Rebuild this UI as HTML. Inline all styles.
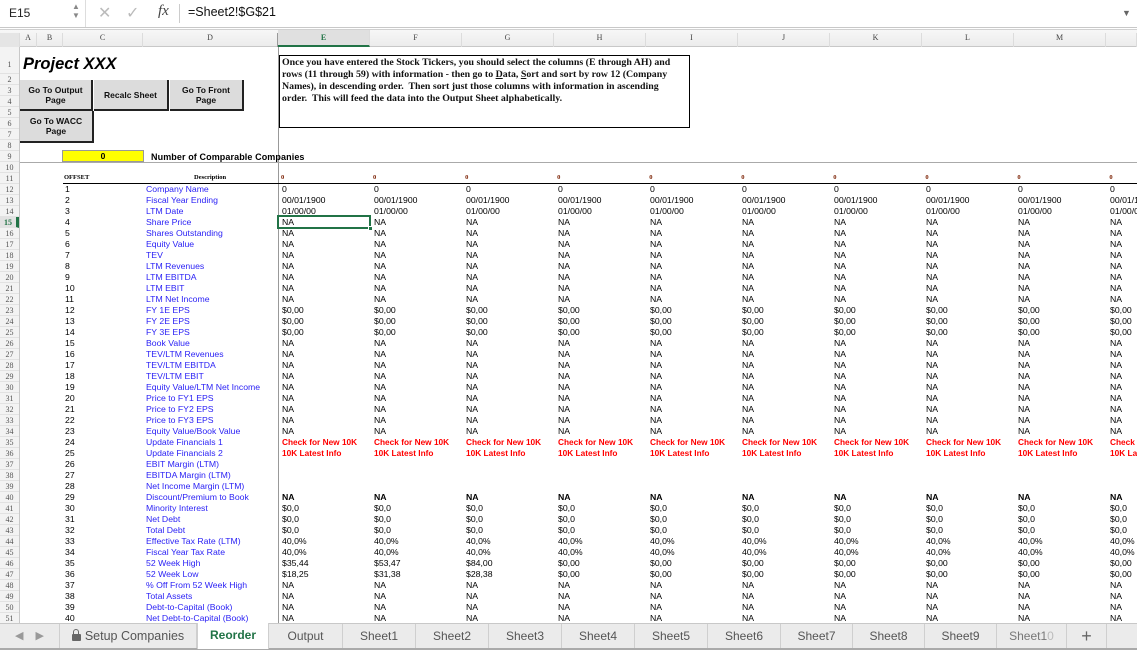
<!DOCTYPE html>
<html><head><meta charset="utf-8"><style>
*{margin:0;padding:0;box-sizing:border-box}
body{width:1137px;height:650px;overflow:hidden;background:#fff;position:relative;font-family:"Liberation Sans",sans-serif}
.a{position:absolute}
#fb{left:0;top:0;width:1137px;height:28px;border-bottom:1px solid #c8c8c8;background:#fff}
#hdr{left:0;top:29px;width:1137px;height:18px;background:linear-gradient(#f7f7f7,#ececec);border-top:1px solid #d0d0d0;border-bottom:1px solid #c8c8c8;font-family:"Liberation Serif",serif;font-size:8px;color:#444}
#hdr span{position:absolute;top:3px;text-align:center;border-right:1px solid #dcdcdc;height:14px}
#rh{left:0;top:47px;width:20px;height:578px;background:#f3f3f3;border-right:1px solid #c8c8c8;font-family:"Liberation Serif",serif;font-size:8px;color:#555}
#rh div{height:11px;line-height:11px;text-align:center;border-bottom:1px solid #e2e2e2}
#rh div.f{height:26.5px;line-height:36px}
#rh div.sel{color:#217346;font-weight:bold;background:#e2e2e2;border-right:3px solid #217346}
.btn{position:absolute;background:#dcdcdc;border-right:2px solid #222;border-bottom:2px solid #222;font-size:8.5px;font-weight:bold;text-align:center;color:#111;display:flex;align-items:center;justify-content:center;line-height:10px}
#data{left:0;top:183.5px;width:1137px;font-size:8.7px;line-height:11px;color:#000;white-space:nowrap;overflow:hidden}
#data div{height:11px;overflow:hidden}
#data s{display:inline-block;width:81px;margin-left:65px;text-decoration:none}
#data u{display:inline-block;width:136px;text-decoration:none;color:#2b22f5}
#data i{display:inline-block;width:92px;font-style:normal}
#data .b i{font-weight:bold}
#data .r i{font-weight:bold;color:#f00;font-size:8.3px}
#tabs{left:0;top:623px;width:1137px;height:27px;background:#ebebeb;border-top:1px solid #c8c8c8;border-bottom:2px solid #aaa;font-size:12px;color:#555}
#tabs span{position:absolute;top:0;height:24px;line-height:24px;text-align:center;border-right:1px solid #cfcfcf}
.lock{display:inline-block;position:relative;width:9px;height:7px;background:#666;border-radius:1px;margin-right:4px;vertical-align:-1px}
.lock:before{content:"";position:absolute;left:1.5px;top:-5px;width:6px;height:6px;border:1.5px solid #666;border-bottom:0;border-radius:3px 3px 0 0;box-sizing:border-box}
</style></head><body>
<div id="fb" class="a">
<div class="a" style="left:9px;top:6px;font-size:12px;color:#222">E15</div>
<div class="a" style="left:72px;top:2px;font-size:8px;color:#888;line-height:9px">▲<br>▼</div>
<div class="a" style="left:85px;top:0;width:1px;height:27px;background:#ddd"></div>
<div class="a" style="left:98px;top:3px;font-size:16px;color:#bbb">✕</div>
<div class="a" style="left:126px;top:3px;font-size:16px;color:#bbb">✓</div>
<div class="a" style="left:158px;top:3px;font-size:15px;font-style:italic;font-family:'Liberation Serif',serif;color:#444">fx</div>
<div class="a" style="left:179px;top:4px;width:1px;height:19px;background:#ccc"></div>
<div class="a" style="left:188px;top:5px;font-size:12.5px;color:#111">=Sheet2!$G$21</div>
<div class="a" style="left:1122px;top:8px;font-size:9px;color:#666">▼</div>
</div>
<div id="hdr" class="a">
<span style="left:0;width:20px;background:#e5e5e5"></span>
<span style="left:20px;width:17px">A</span><span style="left:37px;width:26px">B</span><span style="left:63px;width:80px">C</span><span style="left:143px;width:135px;border-right:1px solid #999">D</span>
<span style="left:278px;width:92px;color:#217346;font-weight:bold;background:#e0e0e0;border-bottom:2px solid #217346;height:17px;top:0;padding-top:3px">E</span>
<span style="left:370px;width:92px">F</span><span style="left:462px;width:92px">G</span><span style="left:554px;width:92px">H</span><span style="left:646px;width:92px">I</span><span style="left:738px;width:92px">J</span><span style="left:830px;width:92px">K</span><span style="left:922px;width:92px">L</span><span style="left:1014px;width:92px">M</span><span style="left:1106px;width:31px"></span>
</div>
<div id="rh" class="a">
<div class="f">1</div><div>2</div><div>3</div><div>4</div><div>5</div><div>6</div><div>7</div><div>8</div><div>9</div><div>10</div><div>11</div><div>12</div><div>13</div><div>14</div><div class="sel">15</div><div>16</div><div>17</div><div>18</div><div>19</div><div>20</div><div>21</div><div>22</div><div>23</div><div>24</div><div>25</div><div>26</div><div>27</div><div>28</div><div>29</div><div>30</div><div>31</div><div>32</div><div>33</div><div>34</div><div>35</div><div>36</div><div>37</div><div>38</div><div>39</div><div>40</div><div>41</div><div>42</div><div>43</div><div>44</div><div>45</div><div>46</div><div>47</div><div>48</div><div>49</div><div>50</div><div>51</div><div>52</div>
</div>
<div class="a" style="left:278px;top:47px;width:1px;height:576px;background:#999"></div>
<div class="a" style="left:20px;top:162px;width:1117px;height:1px;background:#aaa"></div>
<div class="a" style="left:63px;top:183px;width:1074px;height:1px;background:#000"></div>

<div class="a" style="left:23px;top:55px;font-size:16.5px;font-weight:bold;font-style:italic;color:#000">Project XXX</div>
<div class="btn" style="left:20px;top:80px;width:73px;height:31px">Go To Output<br>Page</div>
<div class="btn" style="left:94px;top:80px;width:75px;height:31px">Recalc Sheet</div>
<div class="btn" style="left:170px;top:80px;width:74px;height:31px">Go To Front<br>Page</div>
<div class="btn" style="left:20px;top:111px;width:74px;height:32px">Go To WACC<br>Page</div>
<div class="a" style="left:62px;top:150px;width:82px;height:12px;background:#ff0;border:1px solid #999;font-size:8.5px;font-weight:bold;text-align:center;line-height:10px">0</div>
<div class="a" style="left:151px;top:152px;font-size:9px;font-weight:bold;letter-spacing:0.1px">Number of Comparable Companies</div>
<div class="a" style="left:279px;top:55px;width:411px;height:73px;border:1px solid #000;padding:1px 2px;font-family:'Liberation Serif',serif;font-weight:bold;font-size:9.9px;line-height:12px;color:#111;white-space:nowrap;overflow:hidden">Once you have entered the Stock Tickers, you should select the columns (E through AH) and<br>rows (11 through 59) with information - then go to <u>D</u>ata, <u>S</u>ort and sort by row 12 (Company<br>Names), in descending order.&nbsp; Then sort just those columns with information in ascending<br>order.&nbsp; This will feed the data into the Output Sheet alphabetically.</div>

<div class="a" style="left:64px;top:174px;font-family:'Liberation Serif',serif;font-size:6.5px;font-weight:bold">OFFSET</div>
<div class="a" style="left:194px;top:174px;font-family:'Liberation Serif',serif;font-size:6.5px;font-weight:bold">Description</div>
<div class="a" style="left:281px;top:174px;font-family:'Liberation Serif',serif;font-size:6.5px;font-weight:bold;color:#7a1f00;white-space:nowrap">0<span style="margin-left:88.8px">0</span><span style="margin-left:88.8px">0</span><span style="margin-left:88.8px">0</span><span style="margin-left:88.8px">0</span><span style="margin-left:88.8px">0</span><span style="margin-left:88.8px">0</span><span style="margin-left:88.8px">0</span><span style="margin-left:88.8px">0</span><span style="margin-left:88.8px">0</span></div>

<div id="data" class="a">
<div><s>1</s><u>Company Name</u><i>0</i><i>0</i><i>0</i><i>0</i><i>0</i><i>0</i><i>0</i><i>0</i><i>0</i><i>0</i></div>
<div><s>2</s><u>Fiscal Year Ending</u><i>00/01/1900</i><i>00/01/1900</i><i>00/01/1900</i><i>00/01/1900</i><i>00/01/1900</i><i>00/01/1900</i><i>00/01/1900</i><i>00/01/1900</i><i>00/01/1900</i><i>00/01/1900</i></div>
<div><s>3</s><u>LTM Date</u><i>01/00/00</i><i>01/00/00</i><i>01/00/00</i><i>01/00/00</i><i>01/00/00</i><i>01/00/00</i><i>01/00/00</i><i>01/00/00</i><i>01/00/00</i><i>01/00/00</i></div>
<div><s>4</s><u>Share Price</u><i>NA</i><i>NA</i><i>NA</i><i>NA</i><i>NA</i><i>NA</i><i>NA</i><i>NA</i><i>NA</i><i>NA</i></div>
<div><s>5</s><u>Shares Outstanding</u><i>NA</i><i>NA</i><i>NA</i><i>NA</i><i>NA</i><i>NA</i><i>NA</i><i>NA</i><i>NA</i><i>NA</i></div>
<div><s>6</s><u>Equity Value</u><i>NA</i><i>NA</i><i>NA</i><i>NA</i><i>NA</i><i>NA</i><i>NA</i><i>NA</i><i>NA</i><i>NA</i></div>
<div><s>7</s><u>TEV</u><i>NA</i><i>NA</i><i>NA</i><i>NA</i><i>NA</i><i>NA</i><i>NA</i><i>NA</i><i>NA</i><i>NA</i></div>
<div><s>8</s><u>LTM Revenues</u><i>NA</i><i>NA</i><i>NA</i><i>NA</i><i>NA</i><i>NA</i><i>NA</i><i>NA</i><i>NA</i><i>NA</i></div>
<div><s>9</s><u>LTM EBITDA</u><i>NA</i><i>NA</i><i>NA</i><i>NA</i><i>NA</i><i>NA</i><i>NA</i><i>NA</i><i>NA</i><i>NA</i></div>
<div><s>10</s><u>LTM EBIT</u><i>NA</i><i>NA</i><i>NA</i><i>NA</i><i>NA</i><i>NA</i><i>NA</i><i>NA</i><i>NA</i><i>NA</i></div>
<div><s>11</s><u>LTM Net Income</u><i>NA</i><i>NA</i><i>NA</i><i>NA</i><i>NA</i><i>NA</i><i>NA</i><i>NA</i><i>NA</i><i>NA</i></div>
<div><s>12</s><u>FY 1E EPS</u><i>$0,00</i><i>$0,00</i><i>$0,00</i><i>$0,00</i><i>$0,00</i><i>$0,00</i><i>$0,00</i><i>$0,00</i><i>$0,00</i><i>$0,00</i></div>
<div><s>13</s><u>FY 2E EPS</u><i>$0,00</i><i>$0,00</i><i>$0,00</i><i>$0,00</i><i>$0,00</i><i>$0,00</i><i>$0,00</i><i>$0,00</i><i>$0,00</i><i>$0,00</i></div>
<div><s>14</s><u>FY 3E EPS</u><i>$0,00</i><i>$0,00</i><i>$0,00</i><i>$0,00</i><i>$0,00</i><i>$0,00</i><i>$0,00</i><i>$0,00</i><i>$0,00</i><i>$0,00</i></div>
<div><s>15</s><u>Book Value</u><i>NA</i><i>NA</i><i>NA</i><i>NA</i><i>NA</i><i>NA</i><i>NA</i><i>NA</i><i>NA</i><i>NA</i></div>
<div><s>16</s><u>TEV/LTM Revenues</u><i>NA</i><i>NA</i><i>NA</i><i>NA</i><i>NA</i><i>NA</i><i>NA</i><i>NA</i><i>NA</i><i>NA</i></div>
<div><s>17</s><u>TEV/LTM EBITDA</u><i>NA</i><i>NA</i><i>NA</i><i>NA</i><i>NA</i><i>NA</i><i>NA</i><i>NA</i><i>NA</i><i>NA</i></div>
<div><s>18</s><u>TEV/LTM EBIT</u><i>NA</i><i>NA</i><i>NA</i><i>NA</i><i>NA</i><i>NA</i><i>NA</i><i>NA</i><i>NA</i><i>NA</i></div>
<div><s>19</s><u>Equity Value/LTM Net Income</u><i>NA</i><i>NA</i><i>NA</i><i>NA</i><i>NA</i><i>NA</i><i>NA</i><i>NA</i><i>NA</i><i>NA</i></div>
<div><s>20</s><u>Price to FY1 EPS</u><i>NA</i><i>NA</i><i>NA</i><i>NA</i><i>NA</i><i>NA</i><i>NA</i><i>NA</i><i>NA</i><i>NA</i></div>
<div><s>21</s><u>Price to FY2 EPS</u><i>NA</i><i>NA</i><i>NA</i><i>NA</i><i>NA</i><i>NA</i><i>NA</i><i>NA</i><i>NA</i><i>NA</i></div>
<div><s>22</s><u>Price to FY3 EPS</u><i>NA</i><i>NA</i><i>NA</i><i>NA</i><i>NA</i><i>NA</i><i>NA</i><i>NA</i><i>NA</i><i>NA</i></div>
<div><s>23</s><u>Equity Value/Book Value</u><i>NA</i><i>NA</i><i>NA</i><i>NA</i><i>NA</i><i>NA</i><i>NA</i><i>NA</i><i>NA</i><i>NA</i></div>
<div class="r"><s>24</s><u>Update Financials 1</u><i>Check for New 10K</i><i>Check for New 10K</i><i>Check for New 10K</i><i>Check for New 10K</i><i>Check for New 10K</i><i>Check for New 10K</i><i>Check for New 10K</i><i>Check for New 10K</i><i>Check for New 10K</i><i>Check for New 10K</i></div>
<div class="r"><s>25</s><u>Update Financials 2</u><i>10K Latest Info</i><i>10K Latest Info</i><i>10K Latest Info</i><i>10K Latest Info</i><i>10K Latest Info</i><i>10K Latest Info</i><i>10K Latest Info</i><i>10K Latest Info</i><i>10K Latest Info</i><i>10K Latest Info</i></div>
<div><s>26</s><u>EBIT Margin (LTM)</u></div>
<div><s>27</s><u>EBITDA Margin (LTM)</u></div>
<div><s>28</s><u>Net Income Margin (LTM)</u></div>
<div class="b"><s>29</s><u>Discount/Premium to Book</u><i>NA</i><i>NA</i><i>NA</i><i>NA</i><i>NA</i><i>NA</i><i>NA</i><i>NA</i><i>NA</i><i>NA</i></div>
<div><s>30</s><u>Minority Interest</u><i>$0,0</i><i>$0,0</i><i>$0,0</i><i>$0,0</i><i>$0,0</i><i>$0,0</i><i>$0,0</i><i>$0,0</i><i>$0,0</i><i>$0,0</i></div>
<div><s>31</s><u>Net Debt</u><i>$0,0</i><i>$0,0</i><i>$0,0</i><i>$0,0</i><i>$0,0</i><i>$0,0</i><i>$0,0</i><i>$0,0</i><i>$0,0</i><i>$0,0</i></div>
<div><s>32</s><u>Total Debt</u><i>$0,0</i><i>$0,0</i><i>$0,0</i><i>$0,0</i><i>$0,0</i><i>$0,0</i><i>$0,0</i><i>$0,0</i><i>$0,0</i><i>$0,0</i></div>
<div><s>33</s><u>Effective Tax Rate (LTM)</u><i>40,0%</i><i>40,0%</i><i>40,0%</i><i>40,0%</i><i>40,0%</i><i>40,0%</i><i>40,0%</i><i>40,0%</i><i>40,0%</i><i>40,0%</i></div>
<div><s>34</s><u>Fiscal Year Tax Rate</u><i>40,0%</i><i>40,0%</i><i>40,0%</i><i>40,0%</i><i>40,0%</i><i>40,0%</i><i>40,0%</i><i>40,0%</i><i>40,0%</i><i>40,0%</i></div>
<div><s>35</s><u>52 Week High</u><i>$35,44</i><i>$53,47</i><i>$84,00</i><i>$0,00</i><i>$0,00</i><i>$0,00</i><i>$0,00</i><i>$0,00</i><i>$0,00</i><i>$0,00</i></div>
<div><s>36</s><u>52 Week Low</u><i>$18,25</i><i>$31,38</i><i>$28,38</i><i>$0,00</i><i>$0,00</i><i>$0,00</i><i>$0,00</i><i>$0,00</i><i>$0,00</i><i>$0,00</i></div>
<div><s>37</s><u>% Off From 52 Week High</u><i>NA</i><i>NA</i><i>NA</i><i>NA</i><i>NA</i><i>NA</i><i>NA</i><i>NA</i><i>NA</i><i>NA</i></div>
<div><s>38</s><u>Total Assets</u><i>NA</i><i>NA</i><i>NA</i><i>NA</i><i>NA</i><i>NA</i><i>NA</i><i>NA</i><i>NA</i><i>NA</i></div>
<div><s>39</s><u>Debt-to-Capital (Book)</u><i>NA</i><i>NA</i><i>NA</i><i>NA</i><i>NA</i><i>NA</i><i>NA</i><i>NA</i><i>NA</i><i>NA</i></div>
<div><s>40</s><u>Net Debt-to-Capital (Book)</u><i>NA</i><i>NA</i><i>NA</i><i>NA</i><i>NA</i><i>NA</i><i>NA</i><i>NA</i><i>NA</i><i>NA</i></div>
</div>
<div class="a" style="left:277px;top:215px;width:94px;height:14px;border:2px solid #217346"></div>
<div class="a" style="left:368px;top:226px;width:5px;height:5px;background:#217346;border:1px solid #fff"></div>

<div id="tabs" class="a">
<span style="left:0;width:60px;color:#999;font-size:11px;letter-spacing:12px;padding-left:12px">◀▶</span>
<span style="left:60px;width:137px;font-size:12.5px"><i class="lock"></i>Setup Companies</span>
<span style="left:197px;width:72px;background:#fff;color:#217346;font-weight:bold;height:26px;top:-1px;border-left:1px solid #cfcfcf">Reorder</span>
<span style="left:269px;width:74px">Output</span>
<span style="left:343px;width:73px">Sheet1</span>
<span style="left:416px;width:73px">Sheet2</span>
<span style="left:489px;width:73px">Sheet3</span>
<span style="left:562px;width:73px">Sheet4</span>
<span style="left:635px;width:73px">Sheet5</span>
<span style="left:708px;width:73px">Sheet6</span>
<span style="left:781px;width:72px">Sheet7</span>
<span style="left:853px;width:72px">Sheet8</span>
<span style="left:925px;width:72px">Sheet9</span>
<span style="left:997px;width:70px;color:#777">Sheet1<span style="position:static;border:0;color:#bbb">0</span></span>
<span style="left:1067px;width:40px;font-size:18px;color:#666">+</span>
</div>
</body></html>
